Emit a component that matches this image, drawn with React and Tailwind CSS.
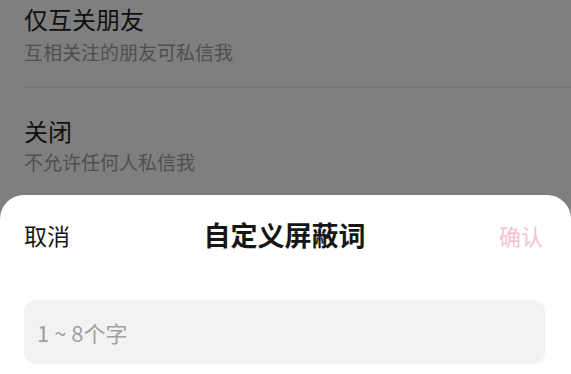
const cjk = { fontFamily: '"Noto Sans CJK SC", "Noto Sans", sans-serif' }

const options = [
  { title: '仅互关朋友', desc: '互相关注的朋友可私信我' },
  { title: '关闭', desc: '不允许任何人私信我' },
]

const App = () => {
  return (
    <div className="relative h-[374px] w-full overflow-hidden bg-white" style={cjk}>
      <div className="pl-6">
        <div className="pt-[3px] pb-[23px] border-b border-[#ececec]">
          <div className="text-[24px] leading-[31px] text-[#1f1f1f]">{options[0].title}</div>
          <div className="mt-[5px] text-[19px] leading-[25px] text-[#9e9e9e]">{options[0].desc}</div>
        </div>
        <div className="pt-[27px]">
          <div className="text-[24px] leading-[31px] text-[#1f1f1f]">{options[1].title}</div>
          <div className="mt-[3px] text-[19px] leading-[25px] text-[#9e9e9e]">{options[1].desc}</div>
        </div>
      </div>

      <div className="absolute inset-0 bg-black/50"></div>

      <div className="absolute left-0 right-0 top-[195px] bottom-0 rounded-t-[24px] bg-white pl-6 pr-[26px]">
        <div className="grid h-[80px] grid-cols-[1fr_auto_1fr] items-center">
          <span className="text-[23px] text-[#161616]">取消</span>
          <span className="text-[27px] font-bold text-[#161616]">自定义屏蔽词</span>
          <span className="pr-[2px] text-right text-[22px] text-[#f7bfd0]">确认</span>
        </div>
        <div className="mt-[25px] flex h-[64px] items-center rounded-[12px] bg-[#f2f2f2] px-[13px]">
          <span className="text-[22px] text-[#9f9f9f]">1 ~ 8个字</span>
        </div>
      </div>
    </div>
  )
}

export default App
